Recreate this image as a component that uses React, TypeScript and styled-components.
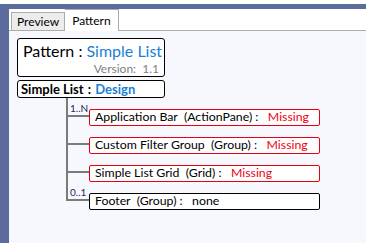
import React from 'react';
import styled, { createGlobalStyle } from 'styled-components';

const GlobalStyle = createGlobalStyle`
  html, body {
    margin: 0;
    padding: 0;
    background: #ffffff;
  }
  * {
    box-sizing: border-box;
  }
`;

interface Part {
  name: string;
  kind: string;
  status: string;
  missing: boolean;
  label?: string;
}

const parts: Part[] = [
  { name: 'Application Bar', kind: 'ActionPane', status: 'Missing', missing: true, label: '1..N' },
  { name: 'Custom Filter Group', kind: 'Group', status: 'Missing', missing: true },
  { name: 'Simple List Grid', kind: 'Grid', status: 'Missing', missing: true },
  { name: 'Footer', kind: 'Group', status: 'none', missing: false, label: '0..1' },
];

const App = () => {
  return (
    <>
      <GlobalStyle />
      <Page>
        <Frame>
          <Panel>
            <TabStrip>
              <Tab>Preview</Tab>
              <Tab active>Pattern</Tab>
            </TabStrip>
            <Content>
              <PatternBox>
                <PatternTitle>
                  Pattern : <Blue>Simple List</Blue>
                </PatternTitle>
                <Version>Version:&nbsp; 1.1</Version>
              </PatternBox>
              <DesignBox>
                Simple List <Sep>:</Sep> <Blue>Design</Blue>
              </DesignBox>
              <Tree>
                {parts.map((p, i) => (
                  <Row key={i}>
                    <Connector>
                      <ConnectorTop>{p.label && <Cardinality>{p.label}</Cardinality>}</ConnectorTop>
                      <ConnectorBottom last={i === parts.length - 1} />
                    </Connector>
                    <NodeBox missing={p.missing}>
                      {p.name}&nbsp; ({p.kind}) :&nbsp;&nbsp;&nbsp;
                      <Status missing={p.missing}>{p.status}</Status>
                    </NodeBox>
                  </Row>
                ))}
              </Tree>
            </Content>
          </Panel>
        </Frame>
      </Page>
    </>
  );
};

const Page = styled.div`
  width: 366px;
  height: 243px;
  padding-top: 4px;
  background: #ffffff;
  font-family: Lato, 'Noto Sans', sans-serif;
`;

const Frame = styled.div`
  height: 239px;
  background: #5b6b9b;
  padding: 5px 0 0 9px;
  display: flex;
`;

const Panel = styled.div`
  flex: 1;
  display: flex;
  flex-direction: column;
  background: #f7f8fe;
`;

const TabStrip = styled.div`
  height: 22px;
  background: #ffffff;
  border-bottom: 1px solid #acacac;
  display: flex;
  align-items: flex-end;
  padding-left: 2px;
`;

const Tab = styled.div<{ active?: boolean }>`
  height: ${(p) => (p.active ? '22px' : '19px')};
  margin-bottom: -1px;
  padding: 0 ${(p) => (p.active ? '7px' : '5px')};
  background: ${(p) => (p.active ? '#ffffff' : '#ececec')};
  border: 1px solid #acacac;
  border-bottom: ${(p) => (p.active ? 'none' : '1px solid #acacac')};
  border-left: ${(p) => (p.active ? 'none' : '1px solid #acacac')};
  font-size: 12px;
  color: #000000;
  display: flex;
  align-items: center;
`;

const Content = styled.div`
  flex: 1;
  padding: 7px 0 0 8px;
  display: flex;
  flex-direction: column;
  align-items: flex-start;
`;

const PatternBox = styled.div`
  width: 148px;
  height: 39px;
  border: 1px solid #000000;
  border-radius: 3px;
  background: #ffffff;
  display: flex;
  flex-direction: column;
  padding: 1px 5px 0 5px;
`;

const PatternTitle = styled.div`
  font-size: 16px;
  line-height: 22px;
  color: #000000;
  white-space: nowrap;
`;

const Version = styled.div`
  font-size: 12px;
  line-height: 13px;
  color: #808080;
  text-align: right;
`;

const Blue = styled.span`
  color: #1a7fd6;
`;

const Sep = styled.span`
  padding: 0 1px;
`;

const DesignBox = styled.div`
  margin-top: 3px;
  width: 148px;
  height: 18px;
  border: 1px solid #000000;
  border-radius: 3px;
  background: #ffffff;
  padding: 0 3px;
  font-size: 13px;
  font-weight: 700;
  line-height: 16px;
  white-space: nowrap;
`;

const Tree = styled.div`
  margin-left: 49px;
  display: flex;
  flex-direction: column;
`;

const Row = styled.div`
  height: 28px;
  display: flex;
`;

const Connector = styled.div`
  width: 23px;
  display: flex;
  flex-direction: column;
`;

const ConnectorTop = styled.div`
  height: 19px;
  border-left: 2px solid #7a7a7a;
  border-bottom: 2px solid #7a7a7a;
  display: flex;
  align-items: flex-end;
  padding: 0 0 1px 2px;
`;

const ConnectorBottom = styled.div<{ last?: boolean }>`
  flex: 1;
  border-left: 2px solid ${(p) => (p.last ? 'transparent' : '#7a7a7a')};
`;

const Cardinality = styled.span`
  font-size: 10px;
  line-height: 11px;
  color: #1c2a5a;
`;

const NodeBox = styled.div<{ missing?: boolean }>`
  margin-top: 11px;
  width: 231px;
  height: 17px;
  border: 1px solid ${(p) => (p.missing ? '#e8000b' : '#000000')};
  border-radius: 2px;
  background: #ffffff;
  padding: 0 5px;
  font-size: 12.3px;
  line-height: 14px;
  color: #000000;
  white-space: nowrap;
`;

const Status = styled.span<{ missing?: boolean }>`
  color: ${(p) => (p.missing ? '#f0000f' : '#000000')};
`;

export default App;
